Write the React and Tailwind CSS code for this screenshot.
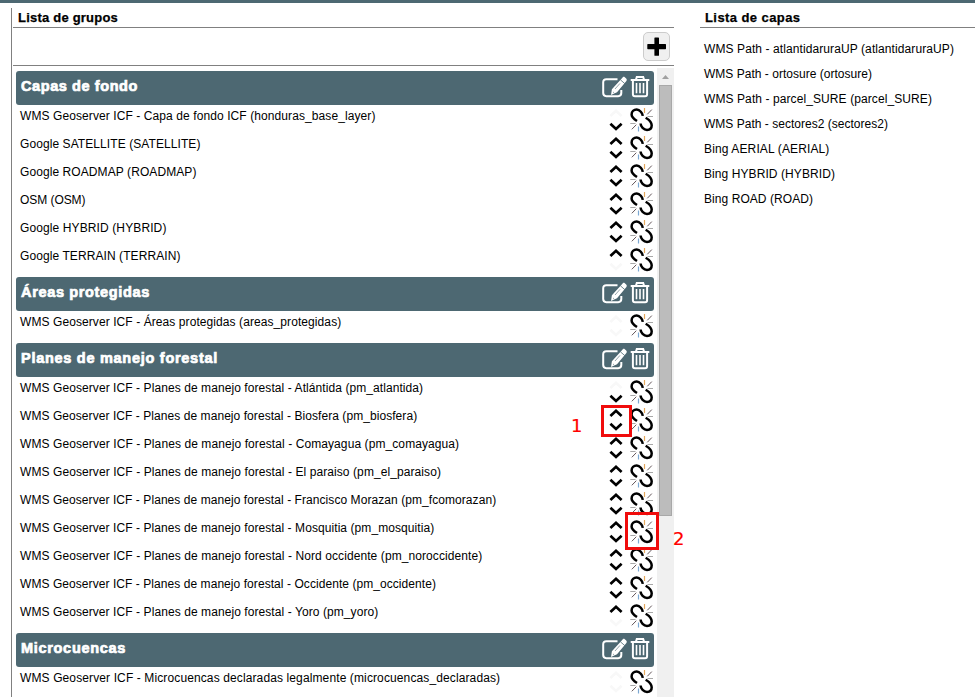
import React from 'react';

const groups = [
  {
    name: 'Capas de fondo', width: 117,
    layers: [
      ['WMS Geoserver ICF - Capa de fondo ICF (honduras_base_layer)', 355.5],
      ['Google SATELLITE (SATELLITE)', 180.5],
      ['Google ROADMAP (ROADMAP)', 176.5],
      ['OSM (OSM)', 65.5],
      ['Google HYBRID (HYBRID)', 146.5],
      ['Google TERRAIN (TERRAIN)', 160.5],
    ],
  },
  { name: 'Áreas protegidas', width: 129, layers: [['WMS Geoserver ICF - Áreas protegidas (areas_protegidas)', 321.3]] },
  {
    name: 'Planes de manejo forestal', width: 197,
    layers: [
      ['WMS Geoserver ICF - Planes de manejo forestal - Atlántida (pm_atlantida)', 403.2],
      ['WMS Geoserver ICF - Planes de manejo forestal - Biosfera (pm_biosfera)', 397.2],
      ['WMS Geoserver ICF - Planes de manejo forestal - Comayagua (pm_comayagua)', 439.2],
      ['WMS Geoserver ICF - Planes de manejo forestal - El paraiso (pm_el_paraiso)', 421],
      ['WMS Geoserver ICF - Planes de manejo forestal - Francisco Morazan (pm_fcomorazan)', 476.2],
      ['WMS Geoserver ICF - Planes de manejo forestal - Mosquitia (pm_mosquitia)', 414.3],
      ['WMS Geoserver ICF - Planes de manejo forestal - Nord occidente (pm_noroccidente)', 462.3],
      ['WMS Geoserver ICF - Planes de manejo forestal - Occidente (pm_occidente)', 416],
      ['WMS Geoserver ICF - Planes de manejo forestal - Yoro (pm_yoro)', 358.3],
    ],
  },
  { name: 'Microcuencas', width: 105, layers: [['WMS Geoserver ICF - Microcuencas declaradas legalmente (microcuencas_declaradas)', 480.2]] },
];

const available = [
  ['WMS Path - atlantidaruraUP (atlantidaruraUP)', 250],
  ['WMS Path - ortosure (ortosure)', 168],
  ['WMS Path - parcel_SURE (parcel_SURE)', 228],
  ['WMS Path - sectores2 (sectores2)', 184],
  ['Bing AERIAL (AERIAL)', 125.5],
  ['Bing HYBRID (HYBRID)', 131],
  ['Bing ROAD (ROAD)', 109],
];

// Spaces the letters so that a label fills the given width.
function Label({ width, className, children }) {
  const ref = React.useRef(null);
  const [spacing, setSpacing] = React.useState(0);
  React.useLayoutEffect(() => {
    const natural = ref.current.getBoundingClientRect().width;
    setSpacing((width - natural) / children.length);
  }, []);
  return <span ref={ref} className={'whitespace-nowrap ' + className} style={{ letterSpacing: spacing + 'px' }}>{children}</span>;
}

function Chevrons({ up, down }) {
  return (
    <svg className="h-7 w-[14px] shrink-0" viewBox="0 0 14 28" fill="none" strokeWidth="2.7">
      <path d="M1.4 11 7 5.8l5.6 5.2" stroke={up ? '#000' : '#f8f8f8'} />
      <path d="m1.4 18.7 5.6 5.2 5.6-5.2" stroke={down ? '#000' : '#f8f8f8'} />
    </svg>
  );
}

function BrokenLink() {
  return (
    <svg className="mt-[3px] h-6 w-6 shrink-0" viewBox="0 0 24 24" fill="none">
      <g stroke="#000" strokeWidth="2.500">
        <path d="M12.800 7.800C12.600 5.300 9.800 1.500 6.700 1.500 3.800 1.500 1.600 3.800 1.600 6.500c0 2.400 2.400 4.600 5.400 6.500" />
        <path d="M15.700 9.700C18.700 11.500 21.700 14.200 21.700 17.300c0 2.800-1.800 4.700-4.700 4.700-3.200 0-6.400-3.300-6.400-6.400" />
      </g>
      <path d="M14.500 0v5" stroke="#e5a85c" strokeWidth="1.200" />
      <path d="m17.300 6.300 4.500-4.700M1.800 21.300 6.300 16.700" stroke="#65575b" strokeWidth="1" />
      <path d="M17.500 8.500H23M.3 15.500H5.500" stroke="#a8a8a8" strokeWidth="1.100" />
      <path d="M8.500 18.500v5" stroke="#7da8d2" strokeWidth="1.200" />
    </svg>
  );
}

function EditIcon() {
  return (
    <svg className="h-6 w-[25px]" viewBox="0 0 25 24" fill="none" stroke="#fff">
      <path d="M15.500 4.200H4.300C2.300 4.200 1.200 5.300 1.200 7.300v10.800c0 2 1.100 3.100 3.100 3.100h11.900c2 0 3.100-1.100 3.100-3.100V15" strokeWidth="2" />
      <path d="m9 20 .9-5.800L19.300 3.900 20.800 2.300c.7-.6 1.300-.6 2 0l1.400 1.300c.8.9.8 1.700 0 2.600L15 17.300z" fill="#fff" stroke="none" />
      <path d="m18.500 4.900 4.300 3.700" stroke="#4d6872" strokeWidth=".8" />
      <path d="m13 14 5-5.600M11 16.900l1.200 1.100" stroke="#4d6872" strokeWidth=".6" />
    </svg>
  );
}

function TrashIcon() {
  return (
    <svg className="h-6 w-5" viewBox="0 0 20 24" fill="none" stroke="#fff">
      <path d="M.7 5h18.600" strokeWidth="2" />
      <path d="M6 4.500 6.800 2h6.400L14 4.500M2.900 5v14.200c0 1.200.8 2 2 2h10.200c1.200 0 2-.8 2-2V5" strokeWidth="2" />
      <path d="M6.500 8v10.200M10 8v10.200M13.500 8v10.200" strokeWidth="1.600" />
    </svg>
  );
}

export default function App() {
  return (
    <div className="relative flex h-[697px] w-[975px] flex-col overflow-hidden bg-white font-['Liberation_Sans',Arial,sans-serif] text-black">
      <div className="h-[3px] shrink-0 bg-[#4d6872]" />
      <main className="flex min-h-0 flex-1 pt-[5px] pl-[11px]">
        <section className="flex w-[663px] shrink-0 flex-col border-l border-[#808080] pl-px">
          <h2 className="h-5 shrink-0 border-b border-[#808080] pl-[5px] text-[13px] leading-[19px] font-bold">
            <Label width={100} className="[-webkit-text-stroke:0.25px]">Lista de grupos</Label>
          </h2>
          <div className="flex h-[38px] shrink-0 justify-end border-b border-[#808080] pt-1 pr-1">
            <button className="flex h-[29px] w-[27px] items-center justify-center rounded-[5px] border border-[#ccc] bg-[#f0f0f0]">
              <svg className="h-5 w-5" viewBox="0 0 20 20"><path d="M8 .5h3.400q.6 0 .6.600V7H18.400q.6 0 .6.600v4q0 .6-.6.600H12v6q0 .6-.6.600H8q-.6 0-.6-.6v-6H.9Q.3 12.200.3 11.600v-4Q.3 7 .9 7H7.400V1.100Q7.400.5 8 .5Z" /></svg>
            </button>
          </div>
          <div className="flex min-h-0 flex-1 pt-[2px]">
            <div className="flex w-[644px] shrink-0 flex-col gap-1 overflow-hidden pt-[3px] pr-[3px] pl-[3px]">
              {groups.map((g) => (
                <div key={g.name} className="shrink-0">
                  <div className="flex h-[34px] justify-between rounded-[3px] bg-[#4d6872] pr-[4px] pl-[5px] text-white">
                    <h3 className="text-[14.5px] leading-[30px] font-bold"><Label width={g.width} className="[-webkit-text-stroke:0.7px]">{g.name}</Label></h3>
                    <div className="flex gap-[3px] pt-[4px]"><EditIcon /><TrashIcon /></div>
                  </div>
                  {g.layers.map(([text, width], i) => (
                    <div key={text} className="flex h-7 pl-1">
                      <div className="flex-1 text-[12px] leading-[22px]"><Label width={width} className="">{text}</Label></div>
                      <Chevrons up={i > 0} down={i < g.layers.length - 1} />
                      <div className="w-[7px]" />
                      <BrokenLink />
                    </div>
                  ))}
                </div>
              ))}
            </div>
            <div className="flex w-[17px] flex-col items-center bg-[#f0f0f0]">
              <div className="flex h-[17px] shrink-0 items-center justify-center"><svg className="h-1 w-[7px]" viewBox="0 0 7 4"><path d="M0 4 3.500 0 7 4z" fill="#a0a0a0" /></svg></div>
              <div className="h-[431px] w-[13px] border border-[#a8a8a8] bg-[#bcbcbc]" />
            </div>
          </div>
        </section>
        <section className="ml-[26px] flex-1">
          <h2 className="h-5 border-b border-[#808080] pl-[5px] text-[13px] leading-[19px] font-bold"><Label width={95.5} className="[-webkit-text-stroke:0.25px]">Lista de capas</Label></h2>
          <ul className="pt-[9px] pl-1">
            {available.map(([text, width]) => <li key={text} className="h-[25px] text-[12px] leading-[25px]"><Label width={width} className="">{text}</Label></li>)}
          </ul>
        </section>
      </main>
      <div className="absolute top-[405px] left-[601px] h-[32px] w-[31px] border-[3px] border-[#f00c0c]" />
      <div className="absolute top-[512px] left-[625px] h-[38px] w-[34px] border-[3px] border-[#f00c0c]" />
      <span className="absolute top-[416px] left-[571px] font-['DejaVu_Sans',sans-serif] text-[18px] leading-5 text-[#f00] [-webkit-text-stroke:0.2px]">1</span>
      <span className="absolute top-[529px] left-[673px] font-['DejaVu_Sans',sans-serif] text-[18px] leading-5 text-[#f00] [-webkit-text-stroke:0.2px]">2</span>
    </div>
  );
}
